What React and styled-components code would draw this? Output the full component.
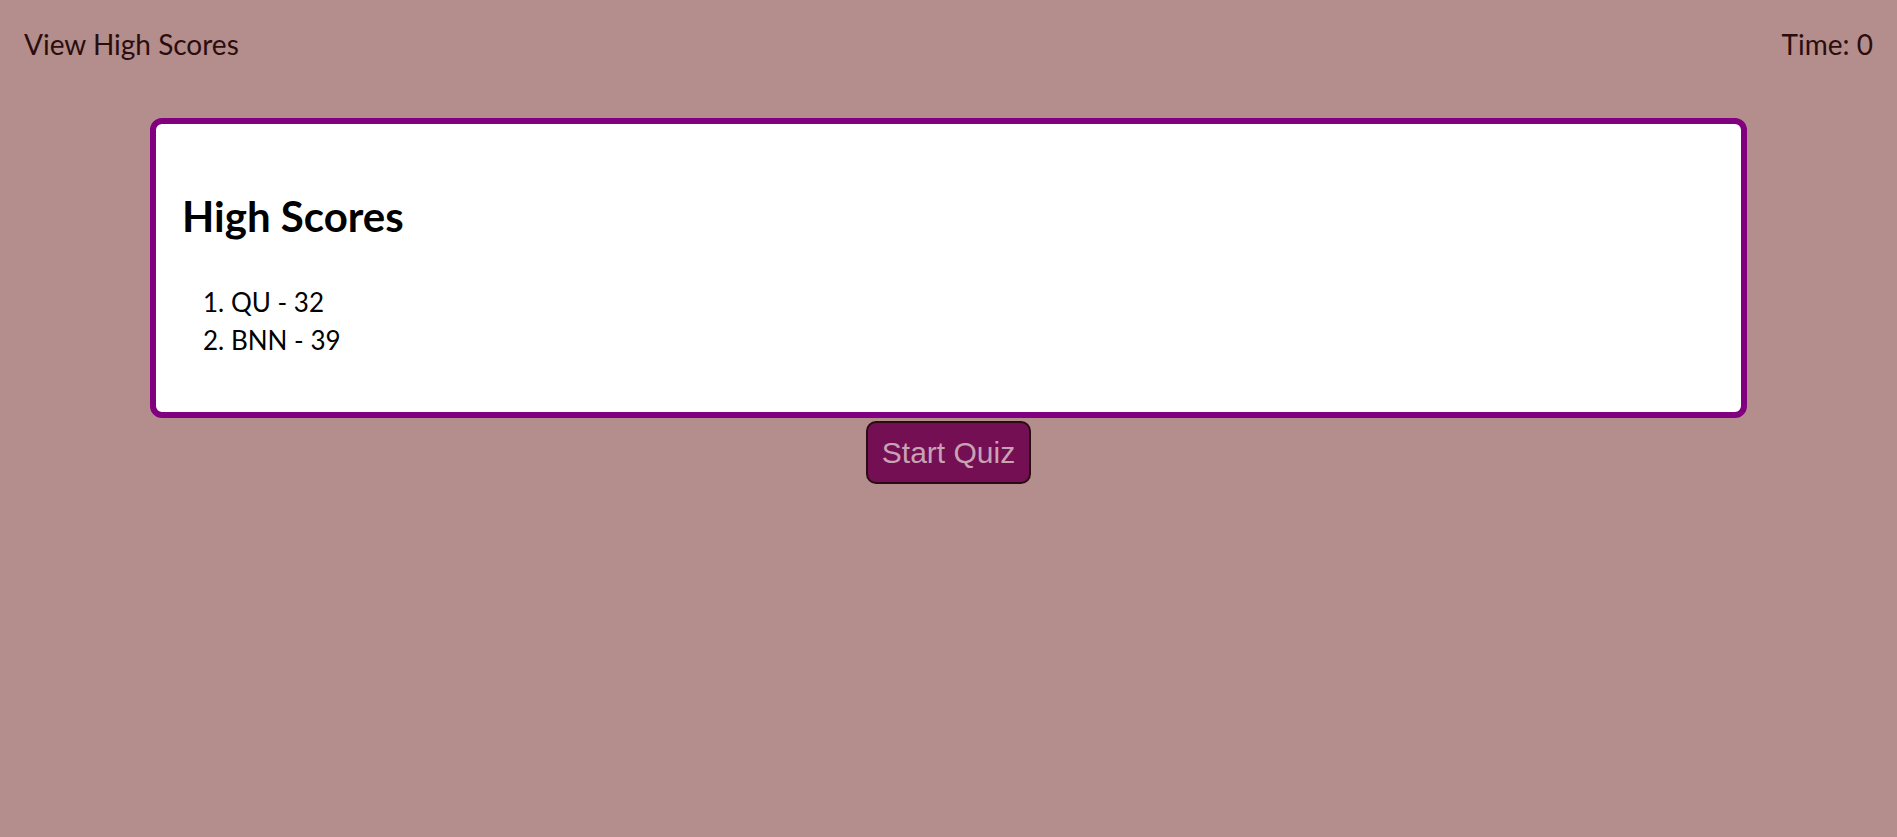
import React from "react";
import styled, { createGlobalStyle } from "styled-components";

const GlobalStyle = createGlobalStyle`
  html, body {
    margin: 0;
    padding: 0;
    background: #b38e8d;
  }
  body {
    font-family: "Lato", "Noto Sans", sans-serif;
    min-height: 837px;
  }
`;

const Page = styled.div`
  display: flex;
  flex-direction: column;
`;

const Header = styled.header`
  display: flex;
  justify-content: space-between;
  align-items: baseline;
  padding: 27px 24px 0;
`;

const HeaderText = styled.span`
  font-size: 28px;
  color: #2b0d0d;
  cursor: ${(p) => (p.$link ? "pointer" : "default")};
`;

const Card = styled.section`
  box-sizing: border-box;
  margin: 57px 150px 0;
  height: 300px;
  background: #ffffff;
  border: 6px solid #800080;
  border-radius: 12px;
  padding: 67px 26px 0;
`;

const Title = styled.h1`
  margin: 0;
  font-size: 42px;
  font-weight: 700;
  line-height: 1.2;
  color: #000;
`;

const ScoreList = styled.ol`
  margin: 42px 0 0;
  padding: 0 0 0 21px;
  list-style-position: inside;
  font-size: 26px;
  line-height: 38px;
  color: #000;
`;

const ScoreItem = styled.li``;

const Actions = styled.div`
  display: flex;
  justify-content: center;
  padding-top: 3px;
`;

const StartButton = styled.button`
  box-sizing: border-box;
  height: 63px;
  padding: 0 14px;
  background: #740f54;
  color: #c9a2b4;
  border: 2px solid #2a0b12;
  border-radius: 10px;
  font-family: "Liberation Sans", Arial, sans-serif;
  font-size: 30px;
  cursor: pointer;
`;

const scores = [
  { name: "QU", score: 32 },
  { name: "BNN", score: 39 },
];

export default function App() {
  return (
    <Page>
      <GlobalStyle />
      <Header>
        <HeaderText $link>View High Scores</HeaderText>
        <HeaderText>Time: 0</HeaderText>
      </Header>
      <Card>
        <Title>High Scores</Title>
        <ScoreList>
          {scores.map((s) => (
            <ScoreItem key={s.name}>
              {s.name} - {s.score}
            </ScoreItem>
          ))}
        </ScoreList>
      </Card>
      <Actions>
        <StartButton>Start Quiz</StartButton>
      </Actions>
    </Page>
  );
}
